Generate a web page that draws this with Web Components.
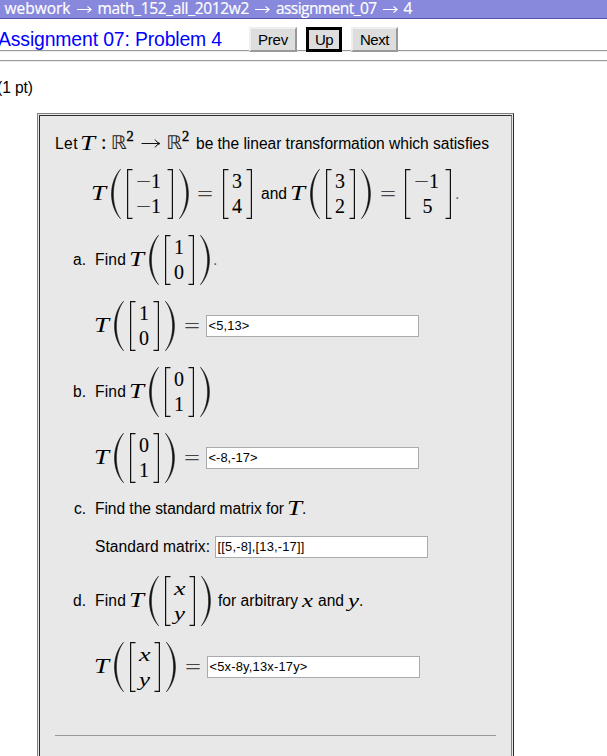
<!DOCTYPE html>
<html lang="en">
<head>
<meta charset="utf-8">
<title>Assignment 07: Problem 4</title>
<style>
html,body{margin:0;background:#fff;color:#000;font-family:"Liberation Sans",Arial,sans-serif;font-size:15.6px;line-height:20px}
body{height:756px;overflow:hidden}
</style>
</head>
<body>
<web-work></web-work>
<script>
const define = (name, css, html, after) => customElements.define(name, class extends HTMLElement {
  connectedCallback() {
    if (this.shadowRoot) return;
    const a = (k, d) => this.getAttribute(k) ?? d;
    const root = this.attachShadow({mode: 'open'});
    root.innerHTML = `<style>${css}</style>` + (typeof html === 'function' ? html(a) : html);
    if (this.hasAttribute('gap')) this.style.marginLeft = a('gap') + 'px';
    if (after) after(this, root, a);
  }
});

// Text run whose letter spacing is tuned to an exact advance width.
define('text-run', ':host{display:block;flex:none;white-space:pre}span{display:inline-block}', '<span><slot></slot></span>',
  (el, root, a) => {
    const span = root.querySelector('span'), w = +a('w', 0);
    if (!w) return;
    const n = el.textContent.length;
    if (!el.hasAttribute('box')) span.style.letterSpacing = (w - span.getBoundingClientRect().width) / n + 'px';
    el.style.width = w + 'px';
  });

const mathCss = `:host{display:block;flex:none}svg{display:block;overflow:visible}
text{font-family:"Liberation Serif","Times New Roman",serif;font-size:20px;fill:#000;stroke:#000;stroke-width:.1}
.i{font-style:italic;stroke:none}.r{font-family:"DejaVu Sans",sans-serif;font-size:18.5px;stroke:none;fill:#222}.op{fill:#444;stroke:none}
path{fill:none;stroke:#111}`;
const glyph = (t, x, y, w, c = '', s = 20) => `<text class="${c}" x="${x}" y="${y}" style="${c === 'r' ? '' : `font-size:${s}px`}" textLength="${w}" lengthAdjust="spacingAndGlyphs">${t}</text>`;

define('math-symbol', mathCss, a => {
  const w = +a('w', 15);
  return `<svg width="${w}" height="50">${glyph(a('ch'), 0, a('y', 31), w, a('kind', 'i'), a('size', 20))}</svg>`;
});

// Two-row column vector; "call" adds the surrounding parentheses.
define('column-vector', mathCss, a => {
  const inner = +a('inner', 29), call = a('call', null) !== null, o = call ? 16 : 0, W = inner + 2 * o, c = o + inner / 2;
  const entry = (t, y) => {
    if (t[0] === '-') return glyph('−', c - 14, y, 15, 'op') + glyph('1', c + 1, y, 10);
    return /\d/.test(t) ? glyph(t, c - 5.5, y, 10) : glyph(t, c - 6, y, t === 'x' ? 11.5 : 11, 'i', 19);
  };
  const p = call ? `<path style="fill:#111" stroke-width=".5" d="M9.6.2C-2.5 13-2.5 37 9.6 49.8C0 37 0 13 9.6.2ZM${W-9.6}.2C${W+2.5} 13 ${W+2.5} 37 ${W-9.6} 49.8C${W} 37 ${W} 13 ${W-9.6}.2Z"/>` : '';
  return `<svg width="${W}" height="50">${p}<path stroke-width="1.2" d="M${o+5.5}.6H${o+.6}V49.4H${o+5.5}M${W-o-5.5}.6H${W-o-.6}V49.4H${W-o-5.5}"/>${entry(a('top'), 19)}${entry(a('bottom'), 44)}</svg>`;
});

define('domain-map', mathCss, () => `<svg width="110" height="50">${
  glyph('T',-1,30.5,15,'i') + glyph(':',20,30,5.5) + glyph('ℝ',29.5,30,16,'r')}
  <text x="45.5" y="22" style="font-size:14.5px;stroke-width:.4">2</text>
  <path stroke-width="1" d="M60.5 24.5H78M74 20.5Q75.5 23.5 79 24.5Q75.5 25.5 74 28.5"/>
  ${glyph('ℝ',85,30,16,'r')}<text x="101" y="22" style="font-size:14.5px;stroke-width:.4">2</text></svg>`);

define('answer-field', `:host{display:block;flex:none;box-sizing:border-box;width:213px;height:22px;border:1px solid #a9abb0;background:#fff;padding:0 1.5px;font-size:12.9px;line-height:20px}`, '<slot></slot>');

define('problem-row', ':host{display:flex;align-items:center}', '<slot></slot>', (el, r, a) => {
  el.style.height = a('h', 50) + 'px';
  el.style.marginTop = a('mt', 0) + 'px';
  el.style.paddingLeft = a('indent', 0) + 'px';
});

define('problem-panel', `:host{display:block;box-sizing:border-box;width:477px;height:643px;margin:0 0 0 37px;padding:1px 1px 0;background:#e8e8e8;border:1px solid #808080;border-right-color:#2c2c2c;border-bottom:0}
div{box-sizing:border-box;height:100%;border:1px solid #2c2c2c;border-right-color:#808080;border-bottom:0;padding:3px 15px 0}`, '<div><slot></slot></div>');

define('rule-line', ':host{display:block;height:1px;background:#999;border-bottom:1px solid #eee}', '');

define('nav-button', `:host{display:block;flex:none;box-sizing:border-box;height:25px;border:2px solid;border-color:#eee #999 #999 #eee;background:#ddd;line-height:22px;font-size:15px;position:relative;z-index:1}
:host([active]){border:3px solid #000;line-height:20px}div{display:flex;justify-content:center}`, '<div><slot></slot></div>',
  (el, r, a) => el.style.width = a('width') + 'px');

define('crumb-bar', `:host{display:flex;box-sizing:border-box;height:19px;padding-left:4.5px;background:#8888dd;border-bottom:1px solid #5555aa;color:#fff;font:500 15.5px/17px "Open Sans","Noto Sans",sans-serif}
text-run{height:18px;line-height:17px;-webkit-text-stroke:.2px #fff}svg{display:block;fill:none;stroke:#fff;stroke-width:1.1;flex:none;margin:0 6px}`, () => {
  const arrow = '<svg width="15" height="18"><path d="M0 9.5H14M10.5 6.5L14.2 9.5L10.5 12.5"/></svg>';
  return `<text-run w="66">webwork</text-run>${arrow}<text-run w="151.5">math_152_all_2012w2</text-run>${arrow}<text-run w="100.5">assignment_07</text-run>${arrow}<text-run>4</text-run>`;
});

define('page-head', `:host{display:flex;height:31px}.t{color:#00f;font-size:19.4px;line-height:24px;margin:8px 0 0 -2px}nav-button{margin-top:8px}`,
  `<text-run class="t" w="224">Assignment 07: Problem 4</text-run>
  <nav-button gap="27" width="48"><text-run w="30">Prev</text-run></nav-button>
  <nav-button gap="9" width="36" active><text-run w="18">Up</text-run></nav-button>
  <nav-button gap="9" width="47"><text-run w="29">Next</text-run></nav-button>`);

const question = (l, top, bottom, tail, inner = 29) => `<problem-row mt="16" indent="18"><text-run box w="22">${l}.</text-run><text-run w="31">Find</text-run><math-symbol gap="3" ch="T"></math-symbol><column-vector gap="5" call inner="${inner}" top="${top}" bottom="${bottom}"></column-vector>${tail}</problem-row>`;
const answer = (top, bottom, value, w, inner = 29) => `<problem-row mt="16" indent="39"><math-symbol ch="T"></math-symbol><column-vector gap="5" call inner="${inner}" top="${top}" bottom="${bottom}"></column-vector><math-symbol gap="9" w="16" y="31.5" kind="op" ch="="></math-symbol><answer-field gap="6"><text-run w="${w}">${value}</text-run></answer-field></problem-row>`;

define('web-work', ':host{display:block}.pt{margin:16px 0 15px -3px}.blue{color:#3465a4}.second{margin-top:8px}.last{margin-top:43px;margin-right:0}', `
<crumb-bar></crumb-bar>
<page-head></page-head>
<rule-line></rule-line>
<rule-line class="second"></rule-line>
<text-run class="pt" w="36">(1 pt)</text-run>
<problem-panel>
  <problem-row><text-run w="23">Let</text-run><domain-map gap="3"></domain-map><text-run gap="5" w="293">be the linear transformation which satisfies</text-run></problem-row>
  <problem-row indent="36"><math-symbol ch="T"></math-symbol><column-vector gap="5" call inner="46" top="-1" bottom="-1"></column-vector><math-symbol gap="8" w="16" y="31.5" kind="op" ch="="></math-symbol><column-vector gap="10" top="3" bottom="4"></column-vector><text-run gap="9" w="26">and</text-run><math-symbol gap="3" ch="T"></math-symbol><column-vector gap="5" call top="3" bottom="2"></column-vector><math-symbol gap="9" w="16" y="31.5" kind="op" ch="="></math-symbol><column-vector gap="9" inner="46" top="-1" bottom="5"></column-vector><text-run gap="4" class="blue">.</text-run></problem-row>
  ${question('a', 1, 0, '<text-run gap="3" class="blue">.</text-run>')}
  ${answer(1, 0, '&lt;5,13&gt;', 41)}
  ${question('b', 0, 1, '')}
  ${answer(0, 1, '&lt;-8,-17&gt;', 49)}
  <problem-row mt="1" indent="19"><text-run box w="21">c.</text-run><text-run w="189">Find the standard matrix for</text-run><math-symbol gap="3" ch="T" y="30.5"></math-symbol><text-run>.</text-run></problem-row>
  <problem-row h="26" indent="40"><text-run w="115">Standard matrix:</text-run><answer-field gap="5"><text-run w="87">[[5,-8],[13,-17]]</text-run></answer-field></problem-row>
  ${question('d', 'x', 'y', '<text-run gap="7" w="80">for arbitrary</text-run><math-symbol gap="4" w="11" size="19" ch="x"></math-symbol><text-run gap="5" w="26">and</text-run><math-symbol gap="4" w="11" size="19" ch="y"></math-symbol><text-run>.</text-run>', 30)}
  ${answer('x', 'y', '&lt;5x-8y,13x-17y&gt;', 98, 30)}
  <rule-line class="last" style="border:0"></rule-line>
</problem-panel>`);
</script>
</body>
</html>
